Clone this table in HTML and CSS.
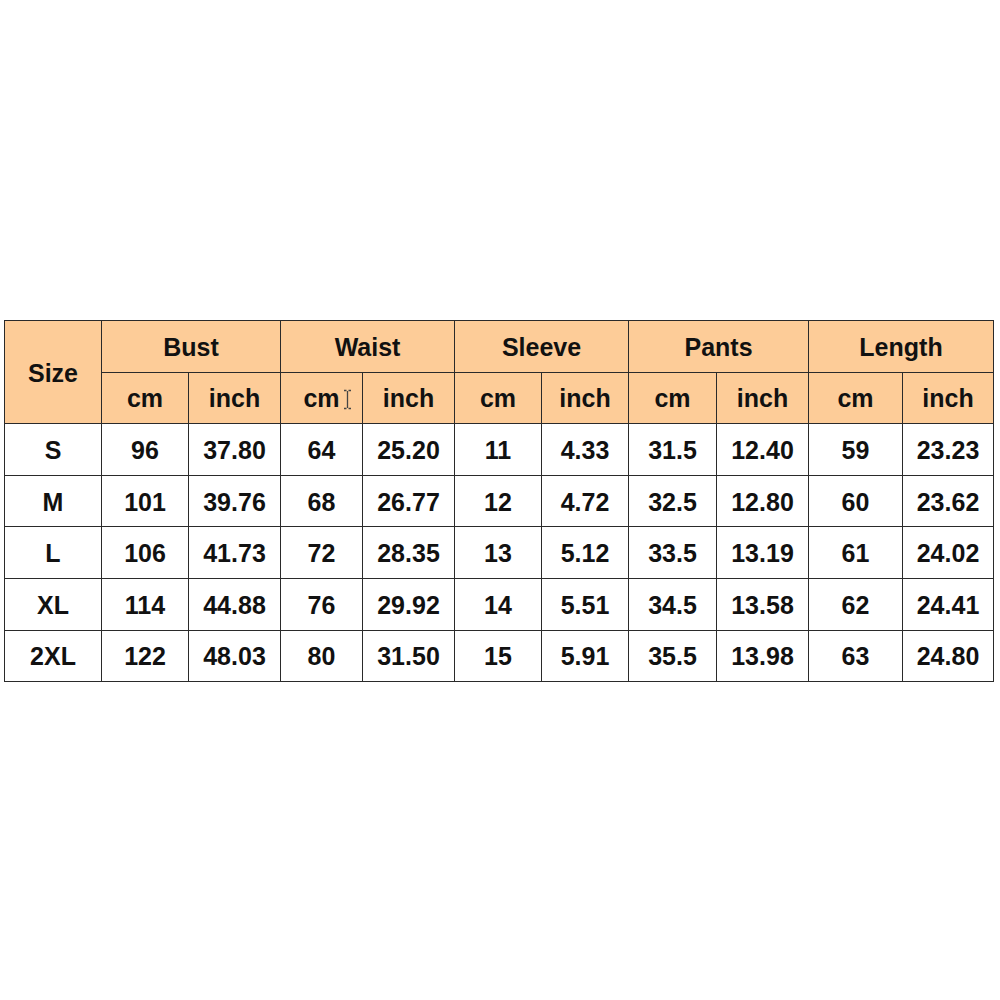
FILE: index.html
```html
<!DOCTYPE html>
<html>
<head>
<meta charset="utf-8">
<link rel="stylesheet" href="styles.css">
</head>
<body>
<div class="wrap">
<table class="size-table">
  <colgroup>
    <col class="c-size">
    <col class="c-a"><col class="c-b">
    <col class="c-c"><col class="c-d">
    <col class="c-e"><col class="c-f">
    <col class="c-g"><col class="c-h">
    <col class="c-i"><col class="c-j">
  </colgroup>
  <thead>
    <tr>
      <th rowspan="2">Size</th>
      <th colspan="2">Bust</th>
      <th colspan="2">Waist</th>
      <th colspan="2">Sleeve</th>
      <th colspan="2">Pants</th>
      <th colspan="2">Length</th>
    </tr>
    <tr>
      <th>cm</th><th>inch</th>
      <th class="cursor-cell">cm<svg class="ibeam" width="9" height="21" viewBox="0 0 9 21"><path d="M1 1.5h2.5M5.5 1.5H8M4.5 2v17M1 19.5h2.5M5.5 19.5H8" stroke="#444" stroke-width="1.3" fill="none"/></svg></th><th>inch</th>
      <th>cm</th><th>inch</th>
      <th>cm</th><th>inch</th>
      <th>cm</th><th>inch</th>
    </tr>
  </thead>
  <tbody>
    <tr><td>S</td><td>96</td><td>37.80</td><td>64</td><td>25.20</td><td>11</td><td>4.33</td><td>31.5</td><td>12.40</td><td>59</td><td>23.23</td></tr>
    <tr><td>M</td><td>101</td><td>39.76</td><td>68</td><td>26.77</td><td>12</td><td>4.72</td><td>32.5</td><td>12.80</td><td>60</td><td>23.62</td></tr>
    <tr><td>L</td><td>106</td><td>41.73</td><td>72</td><td>28.35</td><td>13</td><td>5.12</td><td>33.5</td><td>13.19</td><td>61</td><td>24.02</td></tr>
    <tr><td>XL</td><td>114</td><td>44.88</td><td>76</td><td>29.92</td><td>14</td><td>5.51</td><td>34.5</td><td>13.58</td><td>62</td><td>24.41</td></tr>
    <tr><td>2XL</td><td>122</td><td>48.03</td><td>80</td><td>31.50</td><td>15</td><td>5.91</td><td>35.5</td><td>13.98</td><td>63</td><td>24.80</td></tr>
  </tbody>
</table>
</div>
</body>
</html>
```

FILE: styles.css
```css
html, body {
  margin: 0;
  padding: 0;
  background: #ffffff;
}
.wrap {
  padding: 320px 0 0 4px;
}
.size-table {
  border-collapse: collapse;
  table-layout: fixed;
  width: 989px;
  font-family: "Liberation Sans", Arial, sans-serif;
  font-weight: bold;
  font-size: 25px;
  line-height: 28px;
  color: #111;
}
.c-size { width: 97px; }
.c-a { width: 87px; }
.c-b { width: 92px; }
.c-c { width: 82px; }
.c-d { width: 92px; }
.c-e { width: 87px; }
.c-f { width: 87px; }
.c-g { width: 88px; }
.c-h { width: 92px; }
.c-i { width: 94px; }
.c-j { width: 91px; }
.size-table th,
.size-table td {
  border: 1px solid #2a2a2a;
  text-align: center;
  vertical-align: middle;
  padding: 1px 0 0 0;
  height: 49.6px;
  font-weight: bold;
}
.size-table th {
  background: #fdcc98;
}
.size-table td {
  background: #ffffff;
}
.cursor-cell {
  position: relative;
}
.ibeam {
  position: absolute;
  left: 62px;
  top: 16px;
}
```
